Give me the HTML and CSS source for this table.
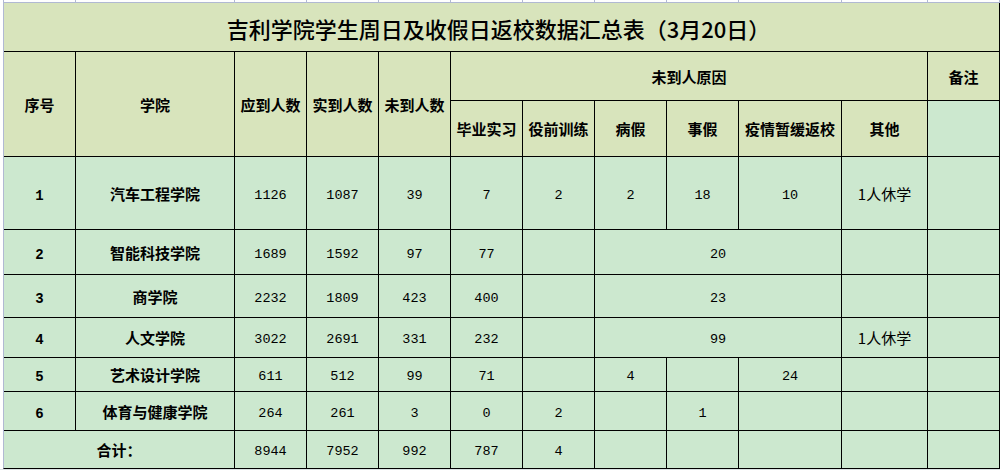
FILE: index.html
```html
<!DOCTYPE html>
<html lang="zh-CN">
<head>
<meta charset="utf-8">
<title>吉利学院学生周日及收假日返校数据汇总表</title>
<link rel="stylesheet" href="styles.css">
</head>
<body>
<div class="gridtop">
  <i></i><i></i><i></i><i></i><i></i><i></i><i></i><i></i><i></i><i></i><i></i><i></i>
</div>
<div class="sheet">
  <div class="c title span12">吉利学院学生周日及收假日返校数据汇总表（3月20日）</div>

  <div class="c hd rs2">序号</div>
  <div class="c hd rs2">学院</div>
  <div class="c hd rs2">应到人数</div>
  <div class="c hd rs2">实到人数</div>
  <div class="c hd rs2">未到人数</div>
  <div class="c hd span6">未到人原因</div>
  <div class="c hd">备注</div>

  <div class="c hd">毕业实习</div>
  <div class="c hd">役前训练</div>
  <div class="c hd">病假</div>
  <div class="c hd">事假</div>
  <div class="c hd">疫情暂缓返校</div>
  <div class="c hd">其他</div>
  <div class="c"></div>

  <div class="c idx">1</div>
  <div class="c name">汽车工程学院</div>
  <div class="c num">1126</div>
  <div class="c num">1087</div>
  <div class="c num">39</div>
  <div class="c num">7</div>
  <div class="c num">2</div>
  <div class="c num">2</div>
  <div class="c num">18</div>
  <div class="c num">10</div>
  <div class="c txt">1人休学</div>
  <div class="c"></div>

  <div class="c idx">2</div>
  <div class="c name">智能科技学院</div>
  <div class="c num">1689</div>
  <div class="c num">1592</div>
  <div class="c num">97</div>
  <div class="c num">77</div>
  <div class="c"></div>
  <div class="c num span3">20</div>
  <div class="c"></div>
  <div class="c"></div>

  <div class="c idx">3</div>
  <div class="c name">商学院</div>
  <div class="c num">2232</div>
  <div class="c num">1809</div>
  <div class="c num">423</div>
  <div class="c num">400</div>
  <div class="c"></div>
  <div class="c num span3">23</div>
  <div class="c"></div>
  <div class="c"></div>

  <div class="c idx">4</div>
  <div class="c name">人文学院</div>
  <div class="c num">3022</div>
  <div class="c num">2691</div>
  <div class="c num">331</div>
  <div class="c num">232</div>
  <div class="c"></div>
  <div class="c num span3">99</div>
  <div class="c txt">1人休学</div>
  <div class="c"></div>

  <div class="c idx">5</div>
  <div class="c name">艺术设计学院</div>
  <div class="c num">611</div>
  <div class="c num">512</div>
  <div class="c num">99</div>
  <div class="c num">71</div>
  <div class="c"></div>
  <div class="c num">4</div>
  <div class="c"></div>
  <div class="c num">24</div>
  <div class="c"></div>
  <div class="c"></div>

  <div class="c idx">6</div>
  <div class="c name">体育与健康学院</div>
  <div class="c num">264</div>
  <div class="c num">261</div>
  <div class="c num">3</div>
  <div class="c num">0</div>
  <div class="c num">2</div>
  <div class="c"></div>
  <div class="c num">1</div>
  <div class="c"></div>
  <div class="c"></div>
  <div class="c"></div>

  <div class="c name span2">合计：</div>
  <div class="c num">8944</div>
  <div class="c num">7952</div>
  <div class="c num">992</div>
  <div class="c num">787</div>
  <div class="c num">4</div>
  <div class="c"></div>
  <div class="c"></div>
  <div class="c"></div>
  <div class="c"></div>
  <div class="c"></div>
</div>
<div class="below"></div>
</body>
</html>
```

FILE: styles.css
```css
html, body {
  margin: 0;
  padding: 0;
  background: #ffffff;
  width: 1000px;
  height: 470px;
  overflow: hidden;
}

body {
  --cols: 71px 158px 71px 71px 71px 71px 71px 71px 71px 102px 85px 71px;
  font-family: "Noto Sans CJK SC", "Noto Sans", sans-serif;
  color: #000;
}

.gridtop {
  display: grid;
  grid-template-columns: var(--cols);
  column-gap: 1px;
  height: 2px;
  margin-left: 3px;
  width: 995px;
  border-left: 1px solid #b1b9d3;
  border-right: 1px solid #b1b9d3;
  border-bottom: 1px solid #b1b9d3;
  background: #b1b9d3;
}

.gridtop i {
  background: #ffffff;
}

.sheet {
  display: grid;
  grid-template-columns: var(--cols);
  grid-template-rows: 48px 48px 55px 72px 44px 42px 39px 33px 38px 37px;
  gap: 1px;
  margin-left: 3px;
  width: 995px;
  background: #000;
  border-left: 1px solid #b1b9d3;
  border-right: 1px solid #000;
  border-bottom: 1px solid #000;
}

.c {
  background: #cce8cf;
  display: flex;
  align-items: center;
  justify-content: center;
  white-space: nowrap;
  font-size: 15px;
  line-height: 1;
}

.title {
  background: #d8e4bc;
  font-size: 22px;
  font-weight: 500;
  padding-top: 1px;
  padding-right: 6px;
}

.hd {
  background: #d8e4bc;
  font-weight: 700;
}

.name {
  font-weight: 700;
}

.idx {
  font-family: "Liberation Mono", monospace;
  font-weight: 700;
  font-size: 14px;
  padding-top: 5px;
}

.num {
  font-family: "Liberation Mono", monospace;
  font-size: 13.5px;
  padding-top: 5px;
}

.txt {
  font-size: 15px;
}

.span12 { grid-column: span 12; }
.span6 { grid-column: span 6; }
.span3 { grid-column: span 3; }
.span2 { grid-column: span 2; }
.rs2 { grid-row: span 2; }

.below {
  height: 1px;
  background: #dce2e4;
}
```
